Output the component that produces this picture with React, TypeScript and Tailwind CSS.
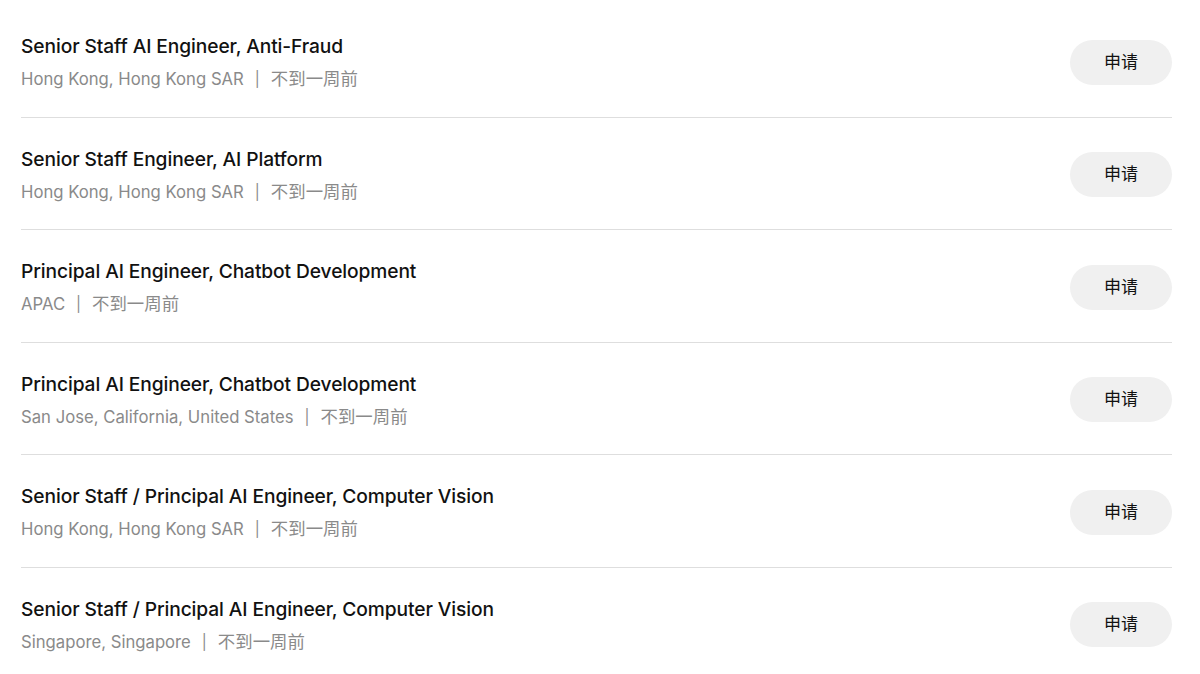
import React from "react";

const jobs = [
  { title: "Senior Staff AI Engineer, Anti-Fraud", loc: "Hong Kong, Hong Kong SAR" },
  { title: "Senior Staff Engineer, AI Platform", loc: "Hong Kong, Hong Kong SAR" },
  { title: "Principal AI Engineer, Chatbot Development", loc: "APAC" },
  { title: "Principal AI Engineer, Chatbot Development", loc: "San Jose, California, United States" },
  { title: "Senior Staff / Principal AI Engineer, Computer Vision", loc: "Hong Kong, Hong Kong SAR" },
  { title: "Senior Staff / Principal AI Engineer, Computer Vision", loc: "Singapore, Singapore" },
];

export default function App() {
  return (
    <div
      className="w-[1200px] h-[674px] overflow-hidden bg-white pt-[5px]"
      style={{ fontFamily: 'Inter, "Noto Sans CJK SC", sans-serif' }}
    >
      <div className="ml-[21px] w-[1151px] flex flex-col">
        {jobs.map((j, i) => (
          <div
            key={i}
            className="h-[112.5px] pt-[3px] flex items-center justify-between border-b border-[#dedede]"
          >
            <div className="flex flex-col gap-[9px] pt-[1px]">
              <div className="text-[19.2px] leading-[24px] font-medium text-[#111] tracking-[-0.1px]">
                {j.title}
              </div>
              <div className="text-[16.7px] leading-[24px] text-[#8a8a8a] flex items-center">
                <span>{j.loc}</span>
                <span className="ml-[11px] mr-[11px] text-[15px]">|</span>
                <span className="text-[17.4px]">不到一周前</span>
              </div>
            </div>
            <button className="w-[102px] h-[45px] rounded-full bg-[#f0f0f0] text-[17px] text-[#111]">
              申请
            </button>
          </div>
        ))}
      </div>
    </div>
  );
}
